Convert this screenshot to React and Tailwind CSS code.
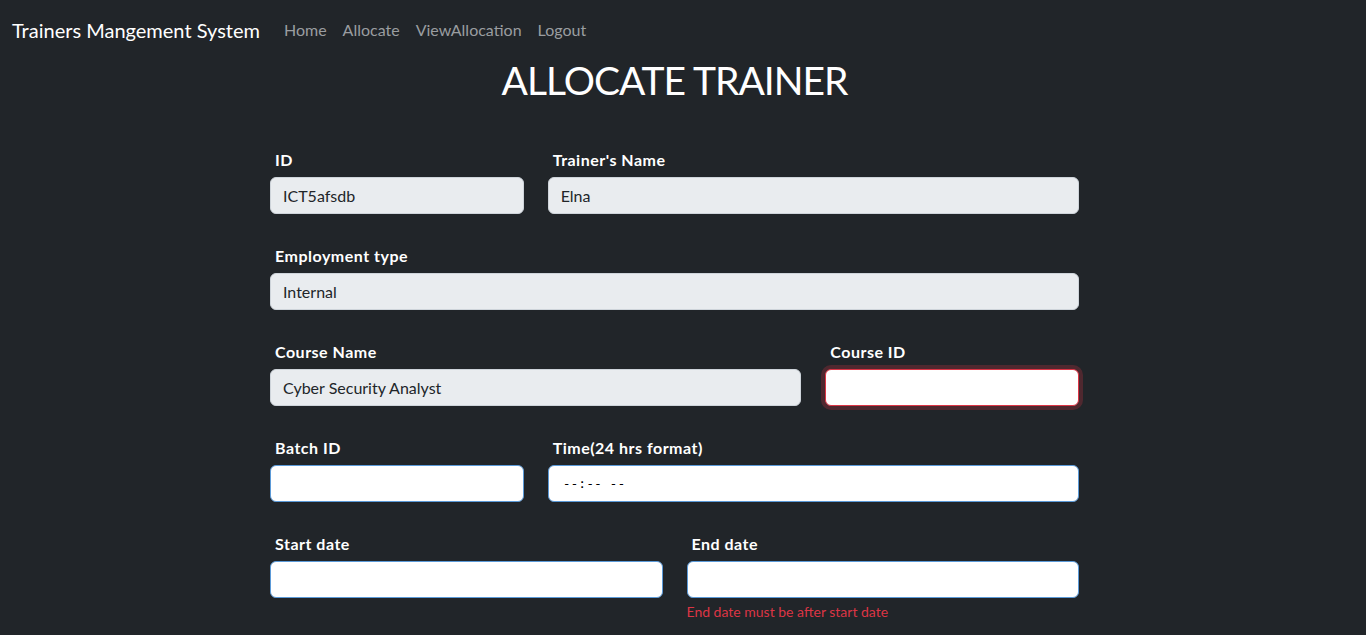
import React from "react";

const font = { fontFamily: 'Lato, "Noto Sans", sans-serif' };

function Label({ children }) {
  return <div className="h-6 pl-[5px] mb-[5px] text-base font-bold leading-6 tracking-[0.5px] text-white">{children}</div>;
}

function ReadOnly({ value }) {
  return (
    <div className="h-[37px] rounded-[6px] border border-[#ced4da] bg-[#e9ecef] px-3 flex items-center text-base text-[#212529]">
      {value}
    </div>
  );
}

function Empty({ invalid, children }) {
  return (
    <div
      className={
        invalid
          ? "h-[37px] rounded-[6px] border border-[#dc3545] bg-white shadow-[0_0_0_4px_rgba(220,53,69,0.25)] px-3 flex items-center"
          : "h-[37px] rounded-[6px] border border-[#5b9ad8] bg-white px-3 flex items-center"
      }
    >
      {children}
    </div>
  );
}

export default function App() {
  return (
    <div className="min-h-screen bg-[#212529] text-white" style={font}>
      <nav className="h-[60px] flex items-center px-3">
        <span className="text-[20px] leading-[30px] mr-4 text-white">Trainers Mangement System</span>
        <div className="flex items-center text-base text-[#9a9da0]">
          <span className="px-2">Home</span>
          <span className="px-2">Allocate</span>
          <span className="px-2">ViewAllocation</span>
          <span className="px-2">Logout</span>
        </div>
      </nav>
      <div className="pr-[17px]">
        <h1 className="text-center text-[39px] leading-[48px] tracking-[-1px] font-normal -mt-[4px]">ALLOCATE TRAINER</h1>
        <div className="w-[809px] mx-auto mt-[44px]">
          <div className="grid grid-cols-3 gap-x-6">
            <div>
              <Label>ID</Label>
              <ReadOnly value="ICT5afsdb" />
            </div>
            <div className="col-span-2">
              <Label>Trainer's Name</Label>
              <ReadOnly value="Elna" />
            </div>
          </div>
          <div className="mt-[30px]">
            <Label>Employment type</Label>
            <ReadOnly value="Internal" />
          </div>
          <div className="grid grid-cols-3 gap-x-6 mt-[30px]">
            <div className="col-span-2">
              <Label>Course Name</Label>
              <ReadOnly value="Cyber Security Analyst" />
            </div>
            <div>
              <Label>Course ID</Label>
              <Empty invalid />
            </div>
          </div>
          <div className="grid grid-cols-3 gap-x-6 mt-[30px]">
            <div>
              <Label>Batch ID</Label>
              <Empty />
            </div>
            <div className="col-span-2">
              <Label>Time(24 hrs format)</Label>
              <Empty>
                <span className="pl-[2px] text-[13px] text-black" style={{ fontFamily: '"DejaVu Sans Mono", monospace' }}>
                  --:-- --
                </span>
              </Empty>
            </div>
          </div>
          <div className="grid grid-cols-2 gap-x-6 mt-[30px]">
            <div>
              <Label>Start date</Label>
              <Empty />
            </div>
            <div>
              <Label>End date</Label>
              <Empty />
              <div className="mt-[3px] text-[14px] leading-[21px] text-[#dc3545]">End date must be after start date</div>
            </div>
          </div>
        </div>
      </div>
    </div>
  );
}
